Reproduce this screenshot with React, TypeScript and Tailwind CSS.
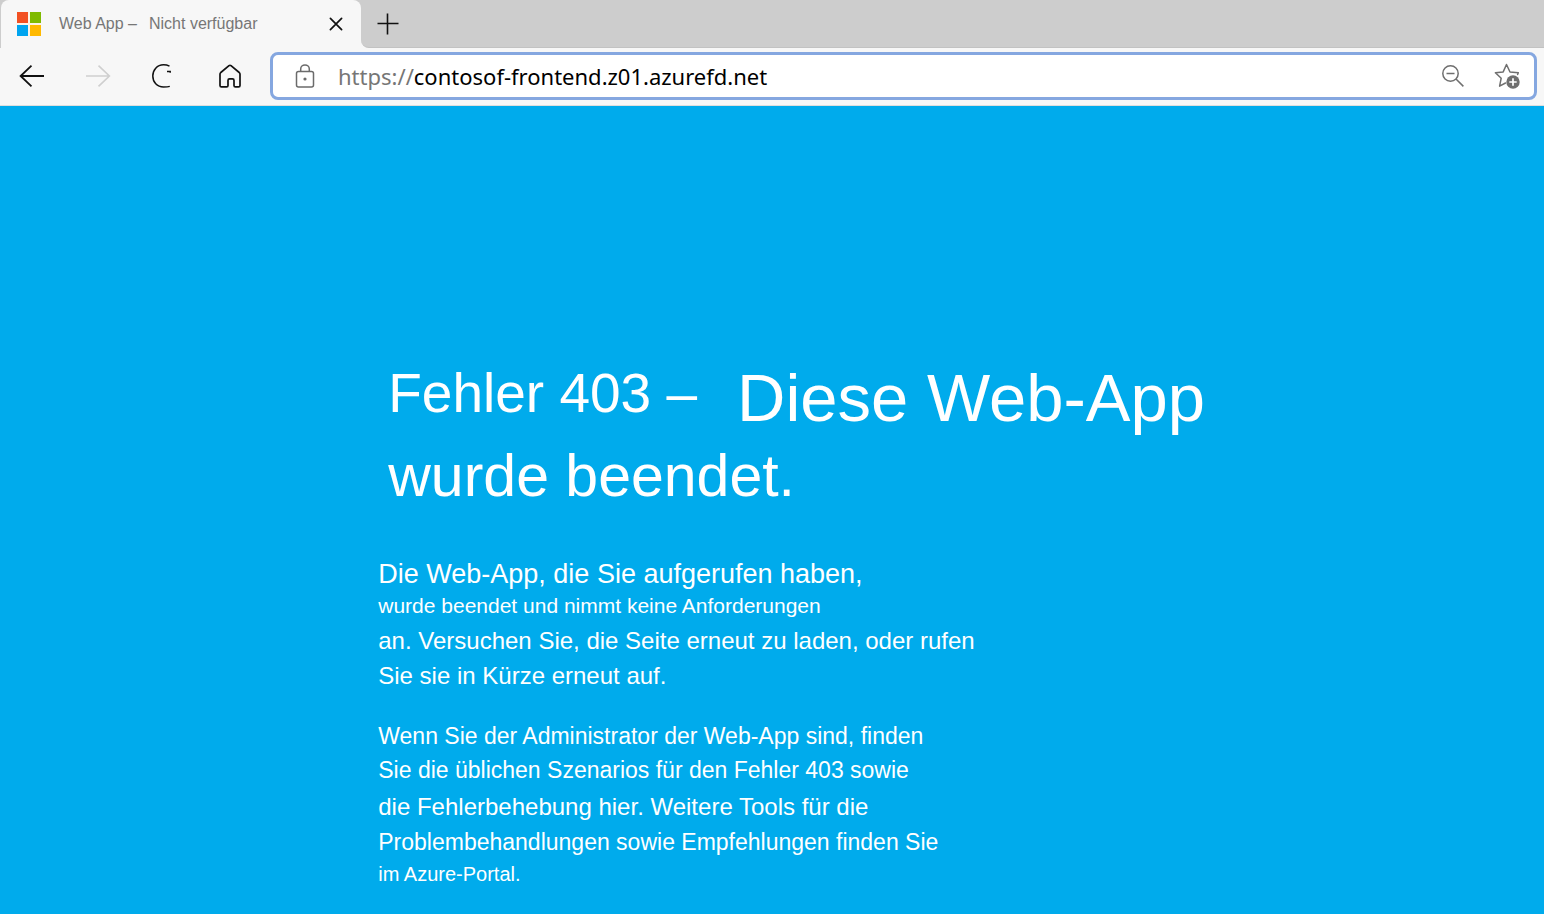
import { useState } from "react";

function MicrosoftLogo() {
  return (
    <svg width="24" height="24" viewBox="0 0 24 24" aria-hidden="true" className="shrink-0">
      <rect width="24" height="24" fill="#fdf3e6" />
      <rect width="11" height="11" fill="#f25022" />
      <rect x="13" width="11" height="11" fill="#7fba00" />
      <rect y="13" width="11" height="11" fill="#00a4ef" />
      <rect x="13" y="13" width="11" height="11" fill="#ffb900" />
    </svg>
  );
}

function CloseIcon() {
  return (
    <svg width="14" height="14" viewBox="0 0 14 14" fill="none" stroke="#111" strokeWidth="1.7" strokeLinecap="round">
      <path d="M1.4 1.4 12.6 12.6M12.6 1.4 1.4 12.6" />
    </svg>
  );
}

function PlusIcon() {
  return (
    <svg width="22" height="22" viewBox="0 0 22 22" fill="none" stroke="#111" strokeWidth="1.6">
      <path d="M10.500 .5v21M.5 10.500h21" />
    </svg>
  );
}

function BackIcon() {
  return (
    <svg width="26" height="24" viewBox="0 0 26 24" fill="none" stroke="#111" strokeWidth="1.8">
      <path d="M12.500 1.700 1.600 12 12.500 22.300M1.600 12H25" />
    </svg>
  );
}

function ForwardIcon() {
  return (
    <svg width="26" height="24" viewBox="0 0 26 24" fill="none" stroke="#cfcfcf" strokeWidth="1.6">
      <path d="M13.500 1.700 24.400 12 13.500 22.300M24.400 12H1" />
    </svg>
  );
}

function ReloadIcon() {
  return (
    <svg width="20" height="24" viewBox="0 0 20 24" fill="none" stroke="#111" strokeWidth="1.5">
      <path d="M18.500 2.200C16.500 1.200 14.600.8 12.500.8 6 .8 1.800 6 1.800 12c0 6 4.200 11 10.700 11 2.300 0 4.500-.1 6.300-.6" />
      <path d="M16 7.500h3.200v1.200" />
    </svg>
  );
}

function HomeIcon() {
  return (
    <svg width="24" height="24" viewBox="0 0 24 24" fill="none" stroke="#111" strokeWidth="1.7" strokeLinejoin="round">
      <path d="M2 10.200c0-.7.3-1.200.8-1.700L11 1.700c.6-.5 1.400-.5 2 0l8.200 6.800c.5.5.8 1 .8 1.700v11.200c0 .8-.6 1.400-1.400 1.400h-3.200c-.8 0-1.400-.6-1.400-1.400v-5c0-.9-.6-1.500-1.500-1.500h-3c-.9 0-1.500.6-1.500 1.500v5c0 .8-.6 1.400-1.400 1.400H3.400c-.8 0-1.400-.6-1.400-1.400Z" />
    </svg>
  );
}

function LockIcon() {
  return (
    <svg width="20" height="24" viewBox="0 0 20 24" fill="none" stroke="#6b6b6b" strokeWidth="1.500">
      <rect x="1.500" y="7.500" width="17" height="15.500" rx="2" />
      <path d="M5.700 7.500V5a4.300 4 0 0 1 8.600 0v2.500" />
      <circle cx="10" cy="15" r="1.600" fill="#6b6b6b" stroke="none" />
    </svg>
  );
}

function ZoomOutIcon() {
  return (
    <svg width="22" height="22" viewBox="0 0 22 22" fill="none" stroke="#6f6f6f" strokeWidth="1.500">
      <circle cx="8.500" cy="8.500" r="7.700" />
      <path d="M4.500 8.500h8M14 14l7.400 7.400" />
    </svg>
  );
}

function FavoriteIcon() {
  return (
    <svg width="26" height="26" viewBox="0 0 26 26" fill="none">
      <path
        d="M23.600 11.500 24.300 9.800 16 9 12.500 1.500 9.200 8.900 1.400 9.800 7.200 15.200 5.600 23.200 11.500 20"
        stroke="#6f6f6f"
        strokeWidth="1.500"
        strokeLinejoin="round"
        strokeLinecap="round"
      />
      <circle cx="19" cy="19" r="6.700" fill="#6f6f6f" />
      <path d="M19 15.300v7.400M15.300 19h7.400" stroke="#fff" strokeWidth="1.700" />
    </svg>
  );
}

function TabStrip() {
  return (
    <div className="flex h-12 bg-[#cdcdcd] pl-px">
      <div className="flex w-[360px] items-center rounded-t-lg bg-[#f7f7f7] pr-[18px] pl-4">
        <MicrosoftLogo />
        <p className="ml-[18px] flex flex-1 gap-3 text-base text-[#767676]">
          <span>Web App –</span>
          <span>Nicht verfügbar</span>
        </p>
        <button type="button" aria-label="Tab schließen">
          <CloseIcon />
        </button>
      </div>
      <div className="flex flex-1 bg-[#f7f7f7]">
        <div className="flex flex-1 items-center rounded-bl-lg border-b border-[#c2c2c2] bg-[#cdcdcd] pl-4">
          <button type="button" aria-label="Neuer Tab">
            <PlusIcon />
          </button>
        </div>
      </div>
    </div>
  );
}

function Toolbar() {
  const [address, setAddress] = useState("contosof-frontend.z01.azurefd.net");
  return (
    <div className="flex h-[58px] items-center border-b border-[#dedede] bg-[#f7f7f7] pr-[7px] pb-px pl-[19px]">
      <nav className="flex w-[251px] shrink-0 items-center gap-10">
        <button type="button" aria-label="Zurück">
          <BackIcon />
        </button>
        <button type="button" aria-label="Vorwärts" disabled>
          <ForwardIcon />
        </button>
        <button type="button" aria-label="Aktualisieren">
          <ReloadIcon />
        </button>
        <button type="button" aria-label="Startseite" className="ml-[7px]">
          <HomeIcon />
        </button>
      </nav>
      <div className="flex h-12 flex-1 items-center rounded-lg border-3 border-[#85a7e0] bg-white pr-3.5 pl-[22px]">
        <LockIcon />
        <label
          htmlFor="address"
          className="ml-[23px] font-['Noto_Sans','Open_Sans',sans-serif] text-[22px] text-[#767676]"
        >
          https://
        </label>
        <input
          id="address"
          type="text"
          value={address}
          onChange={(event) => setAddress(event.target.value)}
          className="min-w-0 flex-1 bg-transparent font-['Noto_Sans','Open_Sans',sans-serif] text-[22px] text-black outline-none"
        />
        <div className="flex items-center gap-[30px]">
          <button type="button" aria-label="Verkleinern">
            <ZoomOutIcon />
          </button>
          <button type="button" aria-label="Zu Favoriten hinzufügen">
            <FavoriteIcon />
          </button>
        </div>
      </div>
    </div>
  );
}

function ErrorPage() {
  return (
    <main className="flex-1 bg-[#00abec] pt-[254px] pb-5 pl-[24.5%] whitespace-nowrap text-white">
      <h1 className="pl-2.5">
        <span className="flex items-start gap-10">
          <span className="text-[55px] leading-[66px]">Fehler 403 –</span>
          <span className="text-[67px] leading-[76px]">Diese Web-App</span>
        </span>
        <span className="block text-[59px] leading-[80px]">wurde beendet.</span>
      </h1>
      <p className="mt-[41px]">
        <span className="block text-[27px] leading-[34px]">Die Web-App, die Sie aufgerufen haben,</span>
        <span className="block text-[21px] leading-[30px]">wurde beendet und nimmt keine Anforderungen</span>
        <span className="block text-[24px] leading-[40px]">an. Versuchen Sie, die Seite erneut zu laden, oder rufen</span>
        <span className="block text-[24px] leading-[30px]">Sie sie in Kürze erneut auf.</span>
      </p>
      <p className="mt-7">
        <span className="block text-[23px] leading-[34px]">Wenn Sie der Administrator der Web-App sind, finden</span>
        <span className="block text-[23px] leading-[34px]">Sie die üblichen Szenarios für den Fehler 403 sowie</span>
        <span className="block text-[24px] leading-[40px]">die Fehlerbehebung hier. Weitere Tools für die</span>
        <span className="block text-[23px] leading-[30px]">Problembehandlungen sowie Empfehlungen finden Sie</span>
        <span className="block text-[20px] leading-[34px]">im Azure-Portal.</span>
      </p>
    </main>
  );
}

export default function App() {
  return (
    <div className="flex min-h-screen flex-col font-['Liberation_Sans',Arial,sans-serif]">
      <header>
        <TabStrip />
        <Toolbar />
      </header>
      <ErrorPage />
    </div>
  );
}
